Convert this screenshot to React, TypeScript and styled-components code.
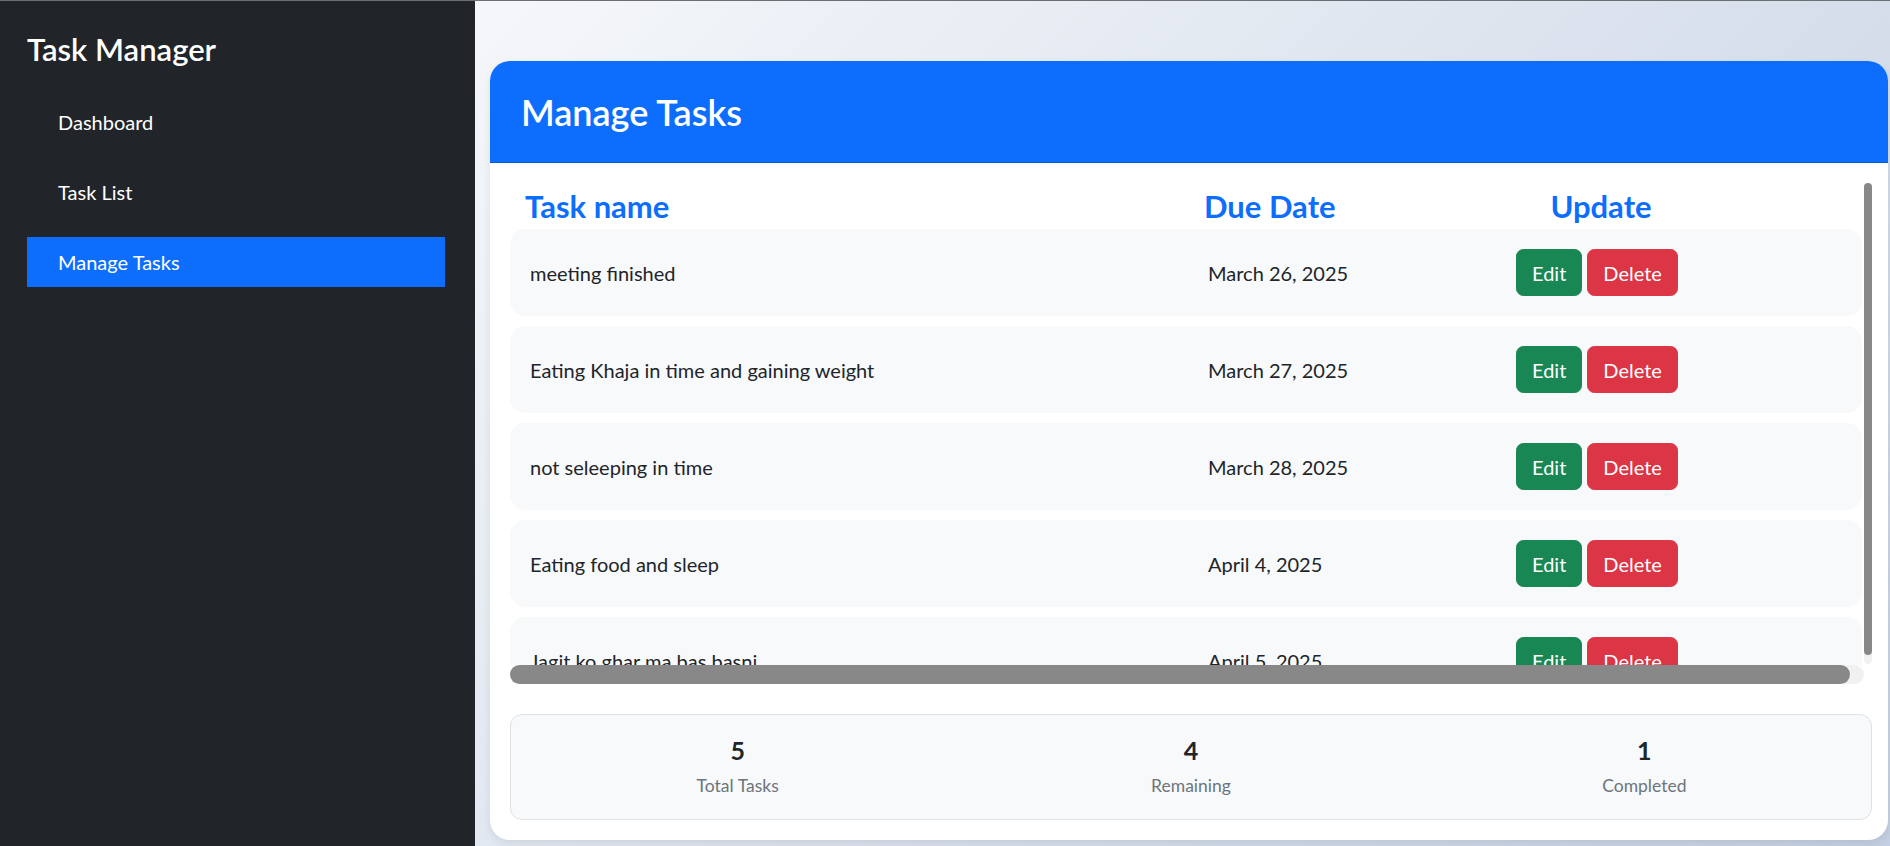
import React from "react";
import styled, { createGlobalStyle } from "styled-components";

const GlobalStyle = createGlobalStyle`
  * { box-sizing: border-box; }
  html, body { margin: 0; padding: 0; }
  body {
    font-family: Lato, "Open Sans", "Noto Sans", sans-serif;
    color: #212529;
    background: #ffffff;
  }
`;

const Shell = styled.div`
  display: flex;
  width: 100%;
  height: 846px;
  overflow: hidden;
  border-top: 1px solid #6b6e72;
`;

const Sidebar = styled.aside`
  width: 475px;
  flex: 0 0 475px;
  background: #212529;
  color: #ffffff;
  padding: 29px 30px 0 27px;
  display: flex;
  flex-direction: column;
`;

const Brand = styled.h3`
  margin: 0 0 29px 0;
  font-size: 31px;
  line-height: 38px;
  font-weight: 600;
`;

const Nav = styled.nav`
  display: flex;
  flex-direction: column;
  gap: 20px;
`;

const NavItem = styled.a<{ $active?: boolean }>`
  display: flex;
  align-items: center;
  height: 50px;
  padding-left: 31px;
  font-size: 20px;
  color: #ffffff;
  text-decoration: none;
  background: ${(p) => (p.$active ? "#0d6efd" : "transparent")};
`;

const Main = styled.main`
  flex: 1;
  min-width: 0;
  background: linear-gradient(135deg, #f5f7fa 0%, #c3cfe2 100%);
  padding: 60px 2px 6px 15px;
  display: flex;
`;

const Card = styled.section`
  flex: 1;
  background: #ffffff;
  border-radius: 20px;
  overflow: hidden;
  box-shadow: 0 4px 10px rgba(0, 0, 0, 0.08);
  display: flex;
  flex-direction: column;
`;

const CardHeader = styled.header`
  height: 102px;
  flex: 0 0 102px;
  display: flex;
  align-items: center;
  padding: 0 31px;
  background: #0d6efd;
  border-bottom: 1px solid rgba(0, 0, 0, 0.175);
`;

const CardTitle = styled.h2`
  margin: 0;
  color: #ffffff;
  font-size: 36px;
  line-height: 48px;
  font-weight: 600;
`;

const CardBody = styled.div`
  flex: 1;
  padding: 20px 16px 19px 20px;
  display: flex;
  flex-direction: column;
`;

const ScrollFrame = styled.div`
  height: 501px;
  display: grid;
  grid-template-columns: 1fr 8px;
  grid-template-rows: 482px 19px;
`;

const Viewport = styled.div`
  overflow: hidden;
  min-width: 0;
`;

const VTrack = styled.div`
  height: 481px;
  background: #f1f1f1;
  border-radius: 4px;
  display: flex;
  flex-direction: column;
`;

const VThumb = styled.div`
  height: 472px;
  background: #888888;
  border-radius: 4px;
`;

const HTrack = styled.div`
  background: #f1f1f1;
  border-radius: 10px;
  display: flex;
`;

const HThumb = styled.div`
  width: 1340px;
  background: #888888;
  border-radius: 10px;
`;

const List = styled.div`
  padding-right: 2px;
`;

const HeadRow = styled.div`
  display: grid;
  grid-template-columns: 679px 300px 194px;
  padding: 5px 0 5px 15px;
  font-size: 31px;
  line-height: 36px;
  font-weight: 700;
  color: #0d6efd;
`;

const HeadCell = styled.div<{ $center?: boolean }>`
  text-align: ${(p) => (p.$center ? "center" : "left")};
  white-space: nowrap;
`;

const TaskRow = styled.div`
  display: grid;
  grid-template-columns: 678px 308px auto;
  align-items: center;
  height: 87px;
  margin-bottom: 10px;
  padding: 0 20px;
  background: #f8f9fa;
  border-radius: 15px;
  font-size: 20px;
  line-height: 24px;
`;

const Cell = styled.div`
  white-space: nowrap;
`;

const Actions = styled.div`
  display: flex;
  gap: 5px;
`;

const Button = styled.button<{ $variant: "edit" | "delete" }>`
  height: 47px;
  padding: 0 15px;
  border: 1px solid ${(p) => (p.$variant === "edit" ? "#198754" : "#dc3545")};
  background: ${(p) => (p.$variant === "edit" ? "#198754" : "#dc3545")};
  color: #ffffff;
  font-family: inherit;
  font-size: 20px;
  border-radius: 7.5px;
  cursor: pointer;
`;

const Stats = styled.div`
  margin-top: 30px;
  height: 106px;
  display: grid;
  grid-template-columns: repeat(3, 1fr);
  background: #f8f9fa;
  border: 1px solid #dee2e6;
  border-radius: 12px;
`;

const Stat = styled.div`
  padding-top: 20px;
  text-align: center;
`;

const StatValue = styled.div`
  font-size: 25px;
  line-height: 30px;
  font-weight: 700;
  color: #212529;
`;

const StatLabel = styled.div`
  margin-top: 10px;
  font-size: 17.5px;
  line-height: 21px;
  color: #6c757d;
`;

const tasks = [
  { name: "meeting finished", date: "March 26, 2025" },
  { name: "Eating Khaja in time and gaining weight", date: "March 27, 2025" },
  { name: "not seleeping in time", date: "March 28, 2025" },
  { name: "Eating food and sleep", date: "April 4, 2025" },
  { name: "Jagit ko ghar ma bas basni", date: "April 5, 2025" },
];

export default function App() {
  return (
    <>
      <GlobalStyle />
      <Shell>
        <Sidebar>
          <Brand>Task Manager</Brand>
          <Nav>
            <NavItem>Dashboard</NavItem>
            <NavItem>Task List</NavItem>
            <NavItem $active>Manage Tasks</NavItem>
          </Nav>
        </Sidebar>
        <Main>
          <Card>
            <CardHeader>
              <CardTitle>Manage Tasks</CardTitle>
            </CardHeader>
            <CardBody>
              <ScrollFrame>
                <Viewport>
                  <List>
                    <HeadRow>
                      <HeadCell>Task name</HeadCell>
                      <HeadCell>Due Date</HeadCell>
                      <HeadCell $center>Update</HeadCell>
                    </HeadRow>
                    {tasks.map((t) => (
                      <TaskRow key={t.name}>
                        <Cell>{t.name}</Cell>
                        <Cell>{t.date}</Cell>
                        <Actions>
                          <Button $variant="edit">Edit</Button>
                          <Button $variant="delete">Delete</Button>
                        </Actions>
                      </TaskRow>
                    ))}
                  </List>
                </Viewport>
                <VTrack>
                  <VThumb />
                </VTrack>
                <HTrack>
                  <HThumb />
                </HTrack>
              </ScrollFrame>
              <Stats>
                <Stat>
                  <StatValue>5</StatValue>
                  <StatLabel>Total Tasks</StatLabel>
                </Stat>
                <Stat>
                  <StatValue>4</StatValue>
                  <StatLabel>Remaining</StatLabel>
                </Stat>
                <Stat>
                  <StatValue>1</StatValue>
                  <StatLabel>Completed</StatLabel>
                </Stat>
              </Stats>
            </CardBody>
          </Card>
        </Main>
      </Shell>
    </>
  );
}
